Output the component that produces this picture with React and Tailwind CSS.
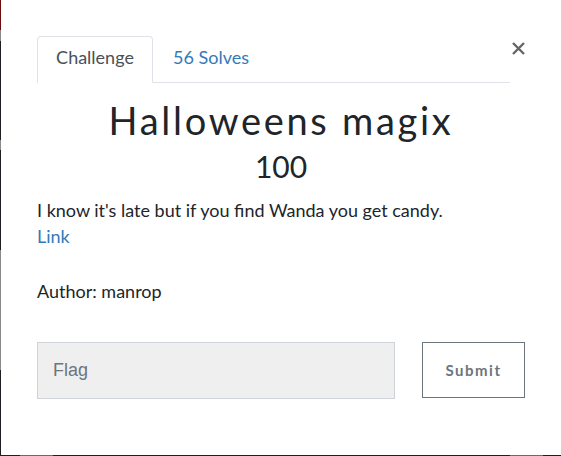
export default function App() {
  const lato = { fontFamily: "Lato, 'Noto Sans', sans-serif" };
  return (
    <div className="w-[561px] h-[456px] flex flex-col bg-[#1c2024] overflow-hidden" style={lato}>
      <div className="flex flex-row h-[455px]">
        <div className="w-[2px] flex flex-col">
          <div className="h-[30px] bg-[#6e0b0b]" />
          <div className="h-[11px] bg-[#8a8a8a]" />
          <div className="h-[99px] bg-[#1c2024]" />
          <div className="h-[10px] bg-[#8a8a8a]" />
          <div className="h-[100px] bg-[#1c2024]" />
          <div className="h-[120px] bg-[#8a8a8a]" />
          <div className="flex-1 bg-[#1c2024]" />
        </div>
        <div className="flex-1 bg-white pt-[36px] pl-[36px] pr-[36px] flex flex-col">
          <div className="flex flex-row items-start">
            <div className="w-[473px] flex flex-row border-b border-[#dee2e6]">
              <div className="w-[116px] h-[47px] -mb-px bg-white border border-[#dee2e6] border-b-white rounded-t-[4px] pt-[8px] text-center text-[18px] leading-[24px] text-[#495057]">
                Challenge
              </div>
              <div className="h-[46px] pt-[9px] pl-[20px] text-[18px] leading-[24px] text-[#337ab7]">
                56 Solves
              </div>
            </div>
            <button className="ml-auto mt-[6px] w-[13px] h-[13px] flex items-center justify-center">
              <svg width="13" height="13" viewBox="0 0 13 13">
                <path d="M1 1 L12 12 M12 1 L1 12" stroke="#666666" strokeWidth="2.4" strokeLinecap="butt" />
              </svg>
            </button>
          </div>
          <h1 className="mt-[15px] text-center text-[38px] leading-[44px] tracking-[2.7px] text-[#212529] font-normal">
            Halloweens magix
          </h1>
          <div className="mt-[6px] text-center text-[30px] leading-[36px] text-[#212529]">100</div>
          <p className="mt-[14px] text-[18px] leading-[24px] text-[#212529]">
            I know it's late but if you find Wanda you get candy.
          </p>
          <a className="mt-[2px] text-[18px] leading-[24px] text-[#337ab7] self-start">Link</a>
          <p className="mt-[31px] text-[18px] leading-[24px] text-[#212529]">Author: manrop</p>
          <div className="mt-[39px] flex flex-row items-start">
            <div
              className="w-[358px] h-[57px] bg-[#efefef] border border-[#ced4da] flex items-center pl-[15px] text-[18px] text-[#6c757d]"
              style={{ fontFamily: "'Liberation Sans', Arial, sans-serif" }}
            >
              Flag
            </div>
            <button className="ml-[27px] w-[103px] h-[56px] border border-[#6c757d] text-[15px] font-bold tracking-[1.5px] text-[#6c757d]">
              Submit
            </button>
          </div>
        </div>
      </div>
      <div className="h-px flex flex-row">
        <div className="w-[20px] bg-[#1c2024]" />
        <div className="w-[33px] bg-[#6a6a6a]" />
        <div className="w-[457px] bg-[#1c2024]" />
        <div className="w-[33px] bg-[#6a6a6a]" />
        <div className="flex-1 bg-[#1c2024]" />
      </div>
    </div>
  );
}
